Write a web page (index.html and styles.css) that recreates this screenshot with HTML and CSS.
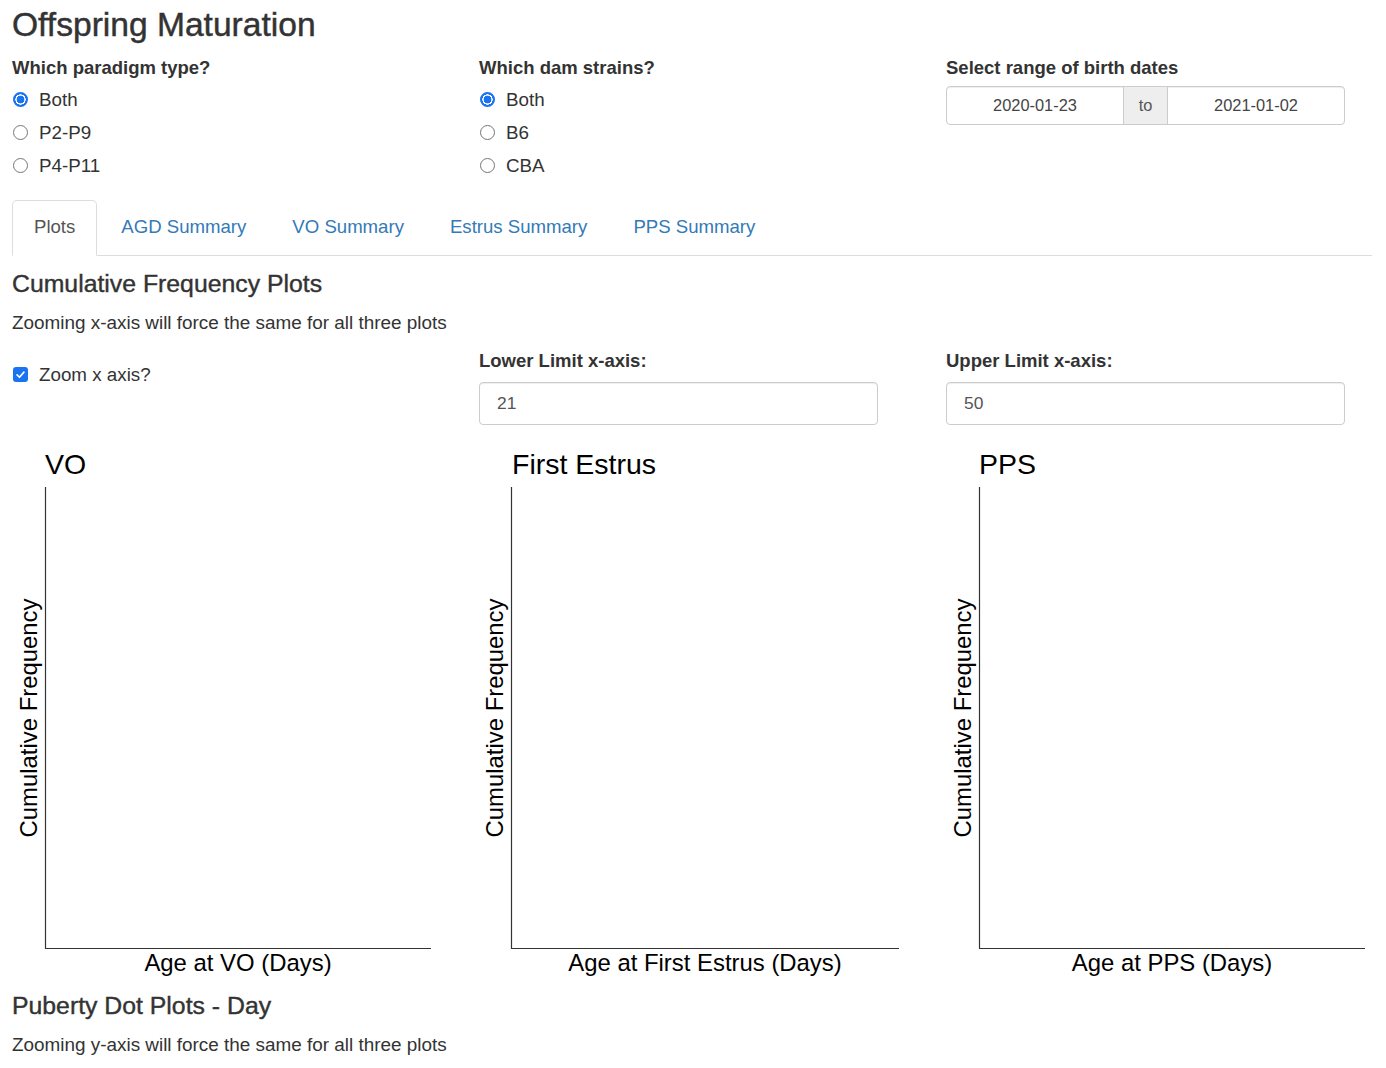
FILE: index.html
```html
<!DOCTYPE html>
<html>
<head>
<meta charset="utf-8">
<link rel="stylesheet" href="styles.css">
</head>
<body>
<div class="page">
  <h2 class="title">Offspring Maturation</h2>
  <div class="row top-row">
    <div class="col">
      <div class="label">Which paradigm type?</div>
      <div class="opt"><span class="radio checked"></span>Both</div>
      <div class="opt"><span class="radio"></span>P2-P9</div>
      <div class="opt"><span class="radio"></span>P4-P11</div>
    </div>
    <div class="col">
      <div class="label">Which dam strains?</div>
      <div class="opt"><span class="radio checked"></span>Both</div>
      <div class="opt"><span class="radio"></span>B6</div>
      <div class="opt"><span class="radio"></span>CBA</div>
    </div>
    <div class="col">
      <div class="label">Select range of birth dates</div>
      <div class="daterange">
        <div class="date">2020-01-23</div>
        <div class="addon">to</div>
        <div class="date">2021-01-02</div>
      </div>
    </div>
  </div>

  <ul class="tabs">
    <li class="active"><a>Plots</a></li>
    <li><a>AGD Summary</a></li>
    <li><a>VO Summary</a></li>
    <li><a>Estrus Summary</a></li>
    <li><a>PPS Summary</a></li>
  </ul>

  <h4 class="sub first">Cumulative Frequency Plots</h4>
  <p class="text">Zooming x-axis will force the same for all three plots</p>

  <div class="row zoom-row">
    <div class="col">
      <div class="opt check-opt"><span class="checkbox"><svg viewBox="0 0 16 16" width="11" height="11"><path d="M3 8.5 L6.5 12 L13 4.5" fill="none" stroke="#fff" stroke-width="2.4" stroke-linecap="round" stroke-linejoin="round"/></svg></span>Zoom x axis?</div>
    </div>
    <div class="col">
      <div class="label">Lower Limit x-axis:</div>
      <div class="numbox">21</div>
    </div>
    <div class="col">
      <div class="label">Upper Limit x-axis:</div>
      <div class="numbox">50</div>
    </div>
  </div>

  <div class="row plot-row">
    <div class="col">
      <svg class="plot" width="426" height="545" viewBox="0 0 426 545">
        <text x="33" y="34" class="ptitle">VO</text>
        <line x1="33.5" y1="47" x2="33.5" y2="508.5" class="axis"/>
        <line x1="33" y1="508.5" x2="419" y2="508.5" class="axis"/>
        <text x="226" y="531" class="plab" text-anchor="middle">Age at VO (Days)</text>
        <text transform="translate(25,278) rotate(-90)" class="plab" text-anchor="middle">Cumulative Frequency</text>
      </svg>
    </div>
    <div class="col">
      <svg class="plot" width="426" height="545" viewBox="0 0 426 545">
        <text x="33" y="34" class="ptitle">First Estrus</text>
        <line x1="32.5" y1="47" x2="32.5" y2="508.5" class="axis"/>
        <line x1="32" y1="508.5" x2="420" y2="508.5" class="axis"/>
        <text x="226" y="531" class="plab" text-anchor="middle">Age at First Estrus (Days)</text>
        <text transform="translate(24,278) rotate(-90)" class="plab" text-anchor="middle">Cumulative Frequency</text>
      </svg>
    </div>
    <div class="col">
      <svg class="plot" width="426" height="545" viewBox="0 0 426 545">
        <text x="33" y="34" class="ptitle">PPS</text>
        <line x1="33.5" y1="47" x2="33.5" y2="508.5" class="axis"/>
        <line x1="33" y1="508.5" x2="419" y2="508.5" class="axis"/>
        <text x="226" y="531" class="plab" text-anchor="middle">Age at PPS (Days)</text>
        <text transform="translate(25,278) rotate(-90)" class="plab" text-anchor="middle">Cumulative Frequency</text>
      </svg>
    </div>
  </div>

  <h4 class="sub second">Puberty Dot Plots - Day</h4>
  <p class="text">Zooming y-axis will force the same for all three plots</p>
</div>
</body>
</html>
```

FILE: styles.css
```css
html, body {
  margin: 0;
  padding: 0;
  background: #fff;
}
body {
  font-family: "Liberation Sans", Arial, sans-serif;
  color: #333;
  font-size: 18.8px;
}
.page {
  padding: 0 14px 0 12px;
}
.title {
  margin: 6px 0 0 0;
  font-size: 33.6px;
  font-weight: normal;
  -webkit-text-stroke: 0.45px #333;
  line-height: 38px;
  height: 38px;
}
.row {
  display: grid;
  grid-template-columns: 467px 467px 1fr;
}
.top-row {
  margin-top: 12px;
}
.label {
  font-weight: bold;
  font-size: 18.5px;
  line-height: 24px;
  height: 24px;
  margin-bottom: 3px;
}
.opt {
  display: flex;
  align-items: center;
  height: 33px;
  line-height: 33px;
}
.radio {
  box-sizing: border-box;
  width: 15px;
  height: 15px;
  border-radius: 50%;
  border: 1.5px solid #767676;
  background: #fff;
  margin: 0 11px 0 1px;
  flex: none;
}
.radio.checked {
  border: 2px solid #1a73f0;
  background: radial-gradient(circle, #1a73f0 0 3.6px, #fff 4.2px 5px, #1a73f0 5.4px);
}
.checkbox {
  box-sizing: border-box;
  width: 15px;
  height: 15px;
  border-radius: 3px;
  background: #1a73f0;
  margin: 0 11px 0 1px;
  flex: none;
  display: flex;
  align-items: center;
  justify-content: center;
}
.daterange {
  margin-top: 6px;
  width: 399px;
  height: 39px;
  box-sizing: border-box;
  border: 1px solid #ccc;
  border-radius: 4px;
  box-shadow: inset 0 1px 1px rgba(0,0,0,.075);
  display: flex;
  font-size: 16.4px;
}
.date {
  flex: 1;
  display: flex;
  align-items: center;
  justify-content: center;
  color: #444;
}
.addon {
  width: 43px;
  background: #eee;
  border-left: 1px solid #ccc;
  border-right: 1px solid #ccc;
  display: flex;
  align-items: center;
  justify-content: center;
  color: #555;
}
.tabs {
  list-style: none;
  margin: 18px 0 0 0;
  padding: 0;
  display: flex;
  border-bottom: 1px solid #ddd;
}
.tabs li {
  margin: 0 2px -1px 0;
}
.tabs a {
  display: block;
  padding: 14px 21px 16px 21px;
  line-height: 24px;
  border: 1px solid transparent;
  border-radius: 5px 5px 0 0;
  color: #337ab7;
  font-size: 18.6px;
}
.tabs li.active a {
  color: #555;
  background: #fff;
  border-color: #ddd #ddd transparent #ddd;
}
.sub {
  font-size: 24.8px;
  font-weight: normal;
  -webkit-text-stroke: 0.4px #333;
  line-height: 30px;
  height: 30px;
  margin: 0;
}
.sub.first {
  margin-top: 13px;
}
.sub.second {
  margin-top: 6px;
}
.text {
  margin: 12px 0 0 0;
  line-height: 24px;
  height: 24px;
  font-size: 18.9px;
}
.zoom-row {
  margin-top: 14px;
}
.check-opt {
  margin-top: 9px;
}
.numbox {
  margin-top: 9px;
  width: 399px;
  height: 43px;
  box-sizing: border-box;
  border: 1px solid #ccc;
  border-radius: 4px;
  box-shadow: inset 0 1px 1px rgba(0,0,0,.075);
  padding-left: 17px;
  display: flex;
  align-items: center;
  font-size: 17.4px;
  color: #555;
}
.plot-row {
  margin-top: 15px;
}
.plot {
  display: block;
  overflow: visible;
}
.ptitle {
  font-family: "Liberation Sans", Arial, sans-serif;
  font-size: 28.5px;
  fill: #000;
}
.plab {
  font-family: "Liberation Sans", Arial, sans-serif;
  font-size: 23.9px;
  fill: #000;
}
.axis {
  stroke: #333;
  stroke-width: 1.2;
}
```
